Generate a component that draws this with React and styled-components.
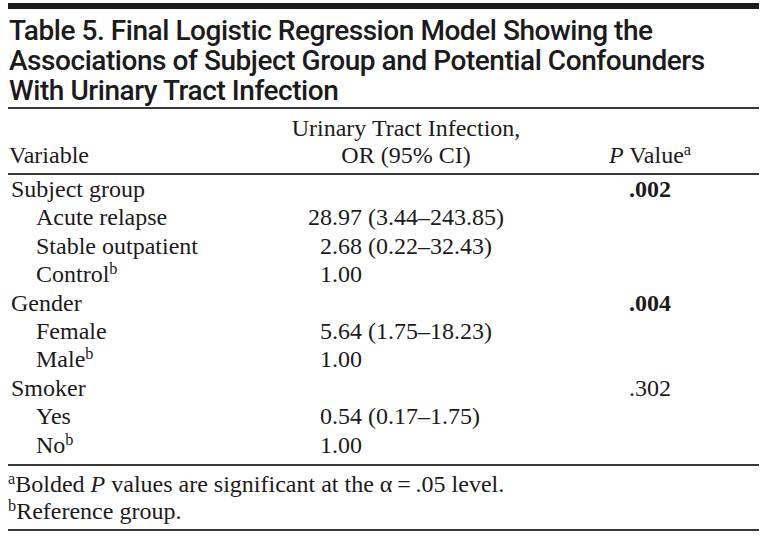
import React from 'react'
import styled, { createGlobalStyle } from 'styled-components'

const Global = createGlobalStyle`
  body {
    margin: 0;
    background: #fff;
    color: #1c1a1b;
  }
`

const rows = [
  { label: 'Subject group', group: true, p: '.002', bold: true },
  { label: 'Acute relapse', or: '28.97 (3.44–243.85)' },
  { label: 'Stable outpatient', or: '\u20072.68 (0.22–32.43)' },
  { label: 'Control', sup: 'b', or: '\u20071.00' },
  { label: 'Gender', group: true, p: '.004', bold: true },
  { label: 'Female', or: '\u20075.64 (1.75–18.23)' },
  { label: 'Male', sup: 'b', or: '\u20071.00' },
  { label: 'Smoker', group: true, p: '.302' },
  { label: 'Yes', or: '\u20070.54 (0.17–1.75)' },
  { label: 'No', sup: 'b', or: '\u20071.00' },
]

function App() {
  return (
    <Page>
      <Global />
      <TopBar />
      <Title>
        Table 5. Final Logistic Regression Model Showing the<br />
        Associations of Subject Group and Potential Confounders<br />
        With Urinary Tract Infection
      </Title>
      <Rule />
      <HeadRow>
        <HeadCell>Variable</HeadCell>
        <OrHead>
          Urinary Tract Infection,<br />
          OR (95% CI)
        </OrHead>
        <PCell>
          <i>P</i> Value<Sup>a</Sup>
        </PCell>
      </HeadRow>
      <Rule />
      <Body>
        {rows.map((r, i) => (
          <Row key={i}>
            <Label $indent={!r.group}>
              {r.label}
              {r.sup ? <Sup>{r.sup}</Sup> : null}
            </Label>
            <OrCell>{r.or}</OrCell>
            <PCell $bold={r.bold}>{r.p}</PCell>
          </Row>
        ))}
      </Body>
      <Rule />
      <Notes>
        <Note>
          <Sup>a</Sup>Bolded <i>P</i> values are significant at the α{'\u2009'}={'\u2009'}.05 level.
        </Note>
        <Note>
          <Sup>b</Sup>Reference group.
        </Note>
      </Notes>
      <Rule />
    </Page>
  )
}

export default App

const Page = styled.div`
  width: 751px;
  margin-left: 8px;
  padding-top: 3px;
  font-family: "Liberation Serif", "Times New Roman", serif;
  font-size: 24px;
`

const TopBar = styled.div`
  height: 6px;
  background: #1c1a1b;
`

const Title = styled.div`
  font-family: Roboto, "Liberation Sans", sans-serif;
  font-weight: 500;
  font-size: 28px;
  line-height: 30px;
  letter-spacing: -0.45px;
  white-space: nowrap;
  padding: 7px 0 1px 1px;
  color: #1c1a1b;
`

const Rule = styled.div`
  height: 2px;
  background: #3a3738;
`

const HeadRow = styled.div`
  display: grid;
  grid-template-columns: 300px 196px 1fr;
  align-items: end;
  line-height: 27px;
  padding: 6px 0 4px;
`

const HeadCell = styled.div`
  padding-left: 1px;
`

const OrHead = styled.div`
  margin: 0 -40px;
  text-align: center;
  white-space: nowrap;
`

const Body = styled.div`
  padding: 0 0 5px;
`

const Row = styled.div`
  display: grid;
  grid-template-columns: 300px 196px 1fr;
  line-height: 28.4px;
  height: 28.4px;
`

const Label = styled.div`
  padding-left: ${p => (p.$indent ? '28px' : '3px')};
  white-space: nowrap;
`

const OrCell = styled.div`
  white-space: pre;
`

const PCell = styled.div`
  margin-left: 100px;
  width: 92px;
  text-align: center;
  white-space: nowrap;
  font-weight: ${p => (p.$bold ? 700 : 400)};
`

const Sup = styled.sup`
  font-size: 0.68em;
  line-height: 0;
  vertical-align: 0.5em;
`

const Notes = styled.div`
  padding: 5px 0 4px;
  line-height: 27px;
`

const Note = styled.div`
  white-space: nowrap;
`
